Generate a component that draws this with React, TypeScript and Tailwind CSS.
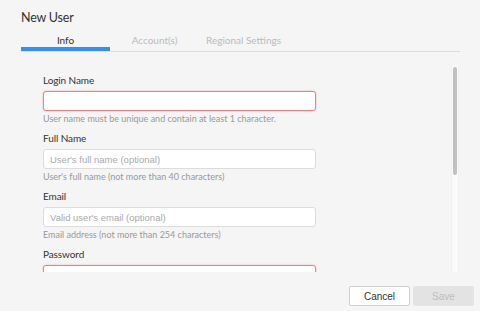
import { useState } from "react";

const sans = "font-['Lato','Noto_Sans',sans-serif]";
const arial = "font-['Liberation_Sans',Arial,sans-serif]";

const tabs = ["Info", "Account(s)", "Regional Settings"];

type FieldProps = {
  label: string;
  placeholder?: string;
  hint?: string;
  invalid?: boolean;
};

function Field({ label, placeholder, hint, invalid }: FieldProps) {
  return (
    <div className="mb-[6px]">
      <div className={`${sans} text-[10px] tracking-[-0.1px] leading-[14px] text-[#333] mb-[4px]`}>{label}</div>
      <input
        className={`${arial} block w-[273px] h-[20px] px-[6px] text-[9.5px] text-[#333] bg-white rounded-[3px] outline-none placeholder:text-[#aaa] ${
          invalid
            ? "border border-[#f08080] shadow-[0_0_2px_rgba(240,128,128,0.6)]"
            : "border border-[#dcdcdc]"
        }`}
        placeholder={placeholder}
      />
      {hint && (
        <div className={`${sans} mt-[2px] text-[9px] leading-[12px] text-[#999]`}>{hint}</div>
      )}
    </div>
  );
}

export default function App() {
  const [active, setActive] = useState(0);

  return (
    <div className="w-[480px] h-[311px] bg-[#f5f5f5] flex flex-col overflow-hidden">
      <div className={`${sans} pt-[9px] pl-[21px] text-[12.5px] tracking-[-0.2px] leading-[18px] text-[#333]`}>
        New User
      </div>

      <div className="ml-[21px] mr-[20px] flex border-b border-[#dcdcdc]">
        {tabs.map((t, i) => (
          <button
            key={t}
            onClick={() => setActive(i)}
            className={`${sans} w-[89px] pt-[6px] text-[10px] leading-[14px] text-center border-b-4 ${
              i === active
                ? "border-[#3a8ee6] text-[#333]"
                : "border-transparent text-[#bbb]"
            }`}
          >
            {t}
          </button>
        ))}
      </div>

      <div className="h-[220px] flex overflow-hidden">
        <div className="flex-1 pl-[43px] pt-[21px]">
          <Field
            label="Login Name"
            invalid
            hint="User name must be unique and contain at least 1 character."
          />
          <Field
            label="Full Name"
            placeholder="User's full name (optional)"
            hint="User's full name (not more than 40 characters)"
          />
          <Field
            label="Email"
            placeholder="Valid user's email (optional)"
            hint="Email address (not more than 254 characters)"
          />
          <Field label="Password" invalid />
        </div>
        <div className="mt-[13px] mr-[21px] w-[8px] bg-[#fafafa] border-x border-[#f0f0f0] flex justify-center">
          <div className="mt-[2px] w-[4px] h-[108px] rounded-full bg-[#c1c1c1]" />
        </div>
      </div>

      <div className="flex-1 flex justify-end gap-[3px] pr-[6px] pt-[14px]">
        <button
          className={`${arial} w-[61px] h-[20px] text-[10px] text-[#333] bg-white border border-[#cfcfcf] rounded-[2px]`}
        >
          Cancel
        </button>
        <button
          disabled
          className={`${arial} w-[61px] h-[20px] text-[10px] text-[#bdbdbd] bg-[#e3e3e3] rounded-[2px]`}
        >
          Save
        </button>
      </div>
    </div>
  );
}
